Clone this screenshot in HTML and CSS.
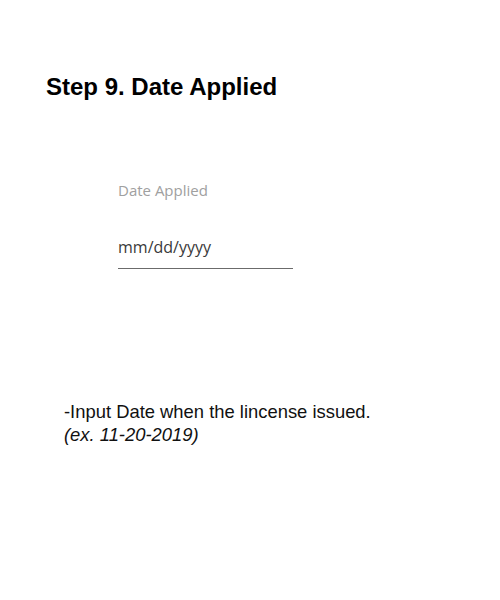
FILE: index.html
```html
<!DOCTYPE html>
<html>
<head>
<meta charset="utf-8">
<link rel="stylesheet" href="styles.css">
</head>
<body>
<div class="page">
  <h1 class="title">Step 9. Date Applied</h1>
  <div class="field">
    <div class="field-label">Date Applied</div>
    <div class="field-input">mm/dd/yyyy</div>
  </div>
  <div class="note">
    <p class="note-line">-Input Date when the lincense issued.</p>
    <p class="note-line note-example">(ex. 11-20-2019)</p>
  </div>
</div>
</body>
</html>
```

FILE: styles.css
```css
html, body {
  margin: 0;
  padding: 0;
  background: #ffffff;
}
.page {
  width: 500px;
  height: 600px;
  padding: 73px 0 0 0;
  box-sizing: border-box;
  font-family: "Liberation Sans", Arial, sans-serif;
}
.title {
  margin: 0 0 0 46px;
  font-size: 24px;
  line-height: 28px;
  font-weight: bold;
  color: #000;
}
.field {
  margin: 79px 0 0 118px;
  width: 175px;
  font-family: "Open Sans", "Noto Sans", sans-serif;
}
.field-label {
  font-size: 15px;
  line-height: 20px;
  color: #a0a0a0;
}
.field-input {
  margin-top: 36px;
  font-size: 16px;
  line-height: 22px;
  color: #3a3a3a;
  padding-bottom: 10px;
  border-bottom: 1px solid #6b6b6b;
}
.note {
  margin: 131px 0 0 64px;
}
.note-line {
  margin: 0;
  font-size: 18.4px;
  line-height: 23px;
  color: #111;
}
.note-example {
  font-style: italic;
}
```
